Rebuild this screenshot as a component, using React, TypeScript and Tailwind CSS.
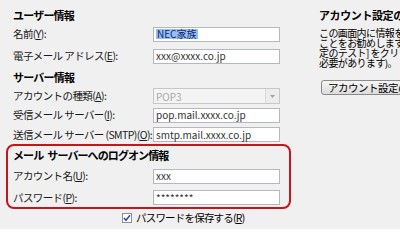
import React from 'react';

const font = { fontFamily: '"Noto Sans CJK JP", "Liberation Sans", sans-serif' };

const Acc: React.FC<{ k: string }> = ({ k }) => <span className="underline">{k}</span>;

const Field: React.FC<{ value: string; selected?: boolean }> = ({ value, selected }) => (
  <div className="w-[127px] h-[15px] border border-[#b5b8bf] bg-white flex items-center px-[2px] text-[10px] text-[#333] leading-none">
    {selected ? <span className="bg-[#99bfee] text-[#10287a] px-[1px]">{value}</span> : value}
  </div>
);

const Row: React.FC<{ h: string; label: React.ReactNode; children: React.ReactNode }> = ({ h, label, children }) => (
  <div className={`flex items-center ${h}`}>
    <div className="w-[140px] text-[10.5px] text-[#1a1a1a] whitespace-nowrap tracking-[-0.6px]">{label}</div>
    {children}
  </div>
);

export default function App() {
  return (
    <div className="w-[400px] h-[229px] bg-[#f0f0f0] overflow-hidden flex" style={font}>
      {/* 左側：アカウント情報 */}
      <div className="w-[319px] shrink-0 pl-[6px] pt-[7px]">
        <div className="pl-[7px]">
          <div className="h-[16px] flex items-center text-[11px] font-bold tracking-[-0.8px]">ユーザー情報</div>
          <Row h="h-[22px]" label={<>名前(<Acc k="Y" />):</>}>
            <Field value="NEC家族" selected />
          </Row>
          <Row h="h-[22px]" label={<>電子メール アドレス(<Acc k="E" />):</>}>
            <Field value="xxx@xxxx.co.jp" />
          </Row>
          <div className="h-[20px] flex items-center text-[11px] font-bold tracking-[-0.8px]">サーバー情報</div>
          <Row h="h-[18px]" label={<>アカウントの種類(<Acc k="A" />):</>}>
            <div className="w-[127px] h-[16px] border border-[#c5c7cc] bg-[#f4f4f4] flex items-center text-[10px] text-[#a8a8a8]">
              <span className="flex-1 pl-[2px]">POP3</span>
              <div className="w-[14px] h-full border-l border-[#d8d8d8] bg-[#ececec] flex items-center justify-center">
                <svg width="5" height="3" viewBox="0 0 5 3"><path d="M0 0h5L2.5 3z" fill="#a0a0a0" /></svg>
              </div>
            </div>
          </Row>
          <Row h="h-[20px]" label={<>受信メール サーバー(<Acc k="I" />):</>}>
            <Field value="pop.mail.xxxx.co.jp" />
          </Row>
          <Row h="h-[19px]" label={<>送信メール サーバー (SMTP)(<Acc k="O" />):</>}>
            <Field value="smtp.mail.xxxx.co.jp" />
          </Row>
        </div>

        {/* ログオン情報（赤枠） */}
        <div className="w-[285px] h-[65px] border-2 border-[#c4161c] rounded-[8px] pl-[5px]">
          <div className="h-[18px] flex items-center gap-[4px] text-[11px] font-bold tracking-[-0.9px] whitespace-nowrap">
            <span>メール</span>
            <span>サーバーへのログオン情報</span>
          </div>
          <Row h="h-[24px]" label={<>アカウント名(<Acc k="U" />):</>}>
            <Field value="xxx" />
          </Row>
          <Row h="h-[19px]" label={<>パスワード(<Acc k="P" />):</>}>
            <Field value="********" />
          </Row>
        </div>

        <div className="h-[17px] flex items-center pl-[116px] gap-[4px]">
          <div className="w-[10px] h-[10px] border border-[#8e8f8f] bg-white flex items-center justify-center">
            <svg width="8" height="8" viewBox="0 0 8 8">
              <path d="M1 4l2 2.2L7 1.2" stroke="#2a4fa8" strokeWidth="1.6" fill="none" />
            </svg>
          </div>
          <span className="text-[10.5px] tracking-[-0.8px] whitespace-nowrap">
            パスワードを保存する(<Acc k="R" />)
          </span>
        </div>
      </div>

      {/* 右側：アカウント設定のテスト */}
      <div className="flex-1 pt-[7px] overflow-hidden">
        <div className="h-[16px] flex items-center text-[11px] font-bold tracking-[-0.4px] whitespace-nowrap">
          アカウント設定のテスト
        </div>
        <div className="mt-[5px] text-[10px] leading-[10px] tracking-[-0.6px] whitespace-nowrap">
          <div>この画面内に情報を入力したら、アカウントのテストを行う</div>
          <div>ことをお勧めします。テストを実行するには [アカウント設</div>
          <div>定のテスト] をクリックします (ネットワークに接続されている</div>
          <div>必要があります)。</div>
        </div>
        <div className="mt-[12px] ml-[2px] w-[120px] h-[15px] border border-[#8a8a8a] rounded-[3px] bg-gradient-to-b from-[#f6f6f6] to-[#dcdcdc] flex items-center pl-[6px] text-[10.5px] tracking-[-0.5px] whitespace-nowrap">
          アカウント設定のテスト(<Acc k="T" />)...
        </div>
      </div>
    </div>
  );
}
